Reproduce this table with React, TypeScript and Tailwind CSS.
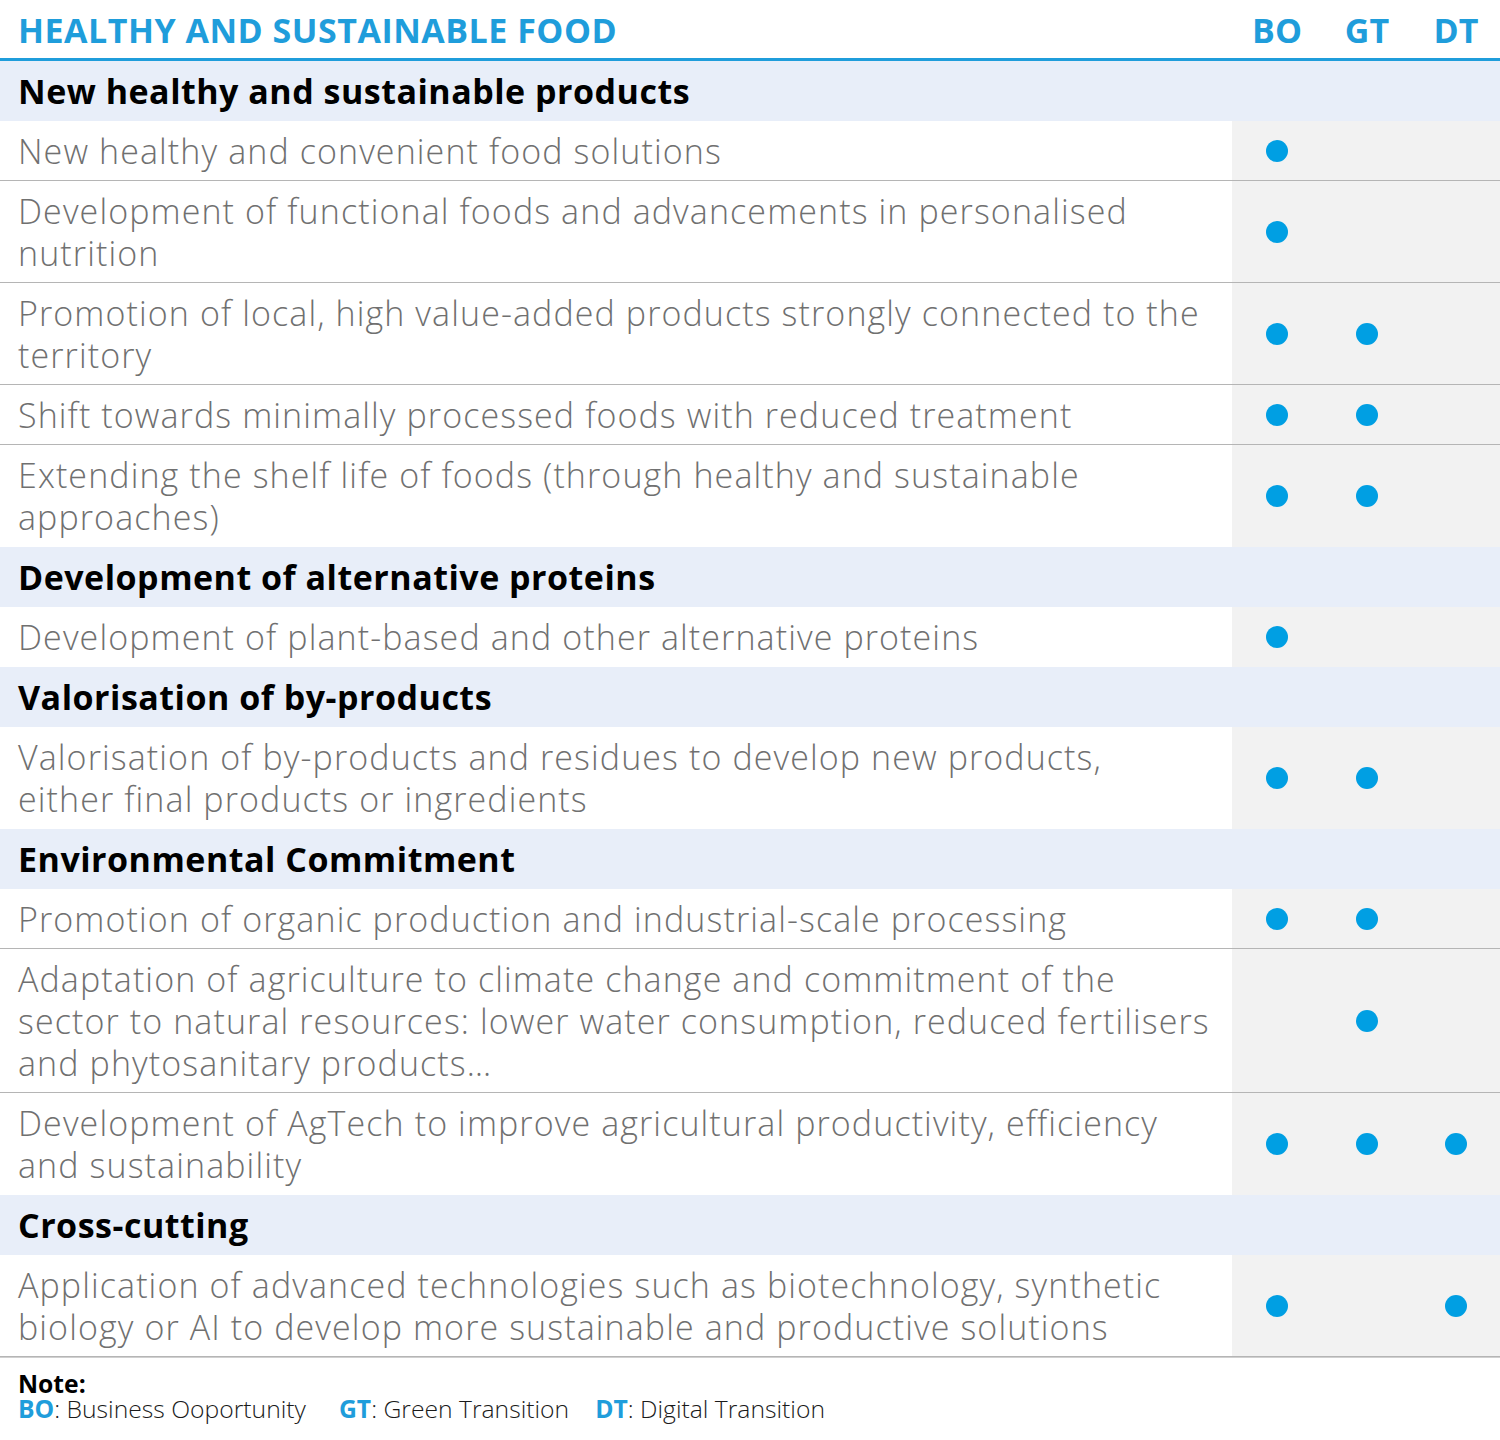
import React from "react";

type Item = { kind: "item"; lines: string[]; dots: [boolean, boolean, boolean] };
type Section = { kind: "section"; text: string };
type Row = Item | Section;

const rows: Row[] = [
  { kind: "section", text: "New healthy and sustainable products" },
  { kind: "item", lines: ["New healthy and convenient food solutions"], dots: [true, false, false] },
  { kind: "item", lines: ["Development of functional foods and advancements in personalised", "nutrition"], dots: [true, false, false] },
  { kind: "item", lines: ["Promotion of local, high value-added products strongly connected to the", "territory"], dots: [true, true, false] },
  { kind: "item", lines: ["Shift towards minimally processed foods with reduced treatment"], dots: [true, true, false] },
  { kind: "item", lines: ["Extending the shelf life of foods (through healthy and sustainable", "approaches)"], dots: [true, true, false] },
  { kind: "section", text: "Development of alternative proteins" },
  { kind: "item", lines: ["Development of plant-based and other alternative proteins"], dots: [true, false, false] },
  { kind: "section", text: "Valorisation of by-products" },
  { kind: "item", lines: ["Valorisation of by-products and residues to develop new products,", "either final products or ingredients"], dots: [true, true, false] },
  { kind: "section", text: "Environmental Commitment" },
  { kind: "item", lines: ["Promotion of organic production and industrial-scale processing"], dots: [true, true, false] },
  { kind: "item", lines: ["Adaptation of agriculture to climate change and commitment of the", "sector to natural resources: lower water consumption, reduced fertilisers", "and phytosanitary products…"], dots: [false, true, false] },
  { kind: "item", lines: ["Development of AgTech to improve agricultural productivity, efficiency", "and sustainability"], dots: [true, true, true] },
  { kind: "section", text: "Cross-cutting" },
  { kind: "item", lines: ["Application of advanced technologies such as biotechnology, synthetic", "biology or AI to develop more sustainable and productive solutions"], dots: [true, false, true] },
];

const colW = ["w-[90px]", "w-[90px]", "w-[88px]"];

export default function App() {
  return (
    <div className="w-[1500px] bg-white" style={{ fontFamily: '"Open Sans", sans-serif' }}>
      <div className="flex h-[61px] items-end pb-[11px] border-b-[3px] border-[#1f9ddb]">
        <div className="flex-1 pl-[18px] text-[34px] leading-none tracking-[0.5px] font-bold text-[#1f9ddb]">
          HEALTHY AND SUSTAINABLE FOOD
        </div>
        {["BO", "GT", "DT"].map((h, i) => (
          <div key={h} className={`${colW[i]} text-center text-[34px] leading-none font-bold text-[#1f9ddb]`}>
            {h}
          </div>
        ))}
      </div>
      {rows.map((r, idx) => {
        if (r.kind === "section") {
          return (
            <div key={idx} className="flex h-[60px] items-center bg-[#e8eef9] pl-[18px] text-[34px] tracking-[0.5px] font-bold text-black">
              {r.text}
            </div>
          );
        }
        const next = rows[idx + 1];
        const line = next === undefined || next.kind === "item";
        return (
          <div key={idx} className={`flex ${line ? "border-b border-[#b5b5b5]" : ""}`}>
            <div className={`flex-1 pl-[18px] pt-[9px] ${line ? "pb-[8px]" : "pb-[9px]"} text-[34px] leading-[42px] tracking-[1.1px] font-light text-[#707070] whitespace-nowrap`}>
              {r.lines.map((l, j) => (
                <div key={j}>{l}</div>
              ))}
            </div>
            {r.dots.map((d, i) => (
              <div key={i} className={`${colW[i]} flex items-center justify-center bg-[#f2f2f2]`}>
                {d && <div className="h-[22px] w-[22px] rounded-full bg-[#009fe3]" />}
              </div>
            ))}
          </div>
        );
      })}
      <div className="h-[1px] bg-[#d0d0d0]" />
      <div className="pl-[18px] pt-[13px] pb-[10px]">
        <div className="text-[24.7px] leading-[25px] font-bold text-black">Note:</div>
        <div className="text-[24.7px] leading-[25px] font-light text-[#1a1a1a]">
          <span className="font-bold text-[#1f9ddb]">BO</span>: Business Ooportunity
          <span className="ml-[33px] font-bold text-[#1f9ddb]">GT</span>: Green Transition
          <span className="ml-[26px] font-bold text-[#1f9ddb]">DT</span>: Digital Transition
        </div>
      </div>
    </div>
  );
}
